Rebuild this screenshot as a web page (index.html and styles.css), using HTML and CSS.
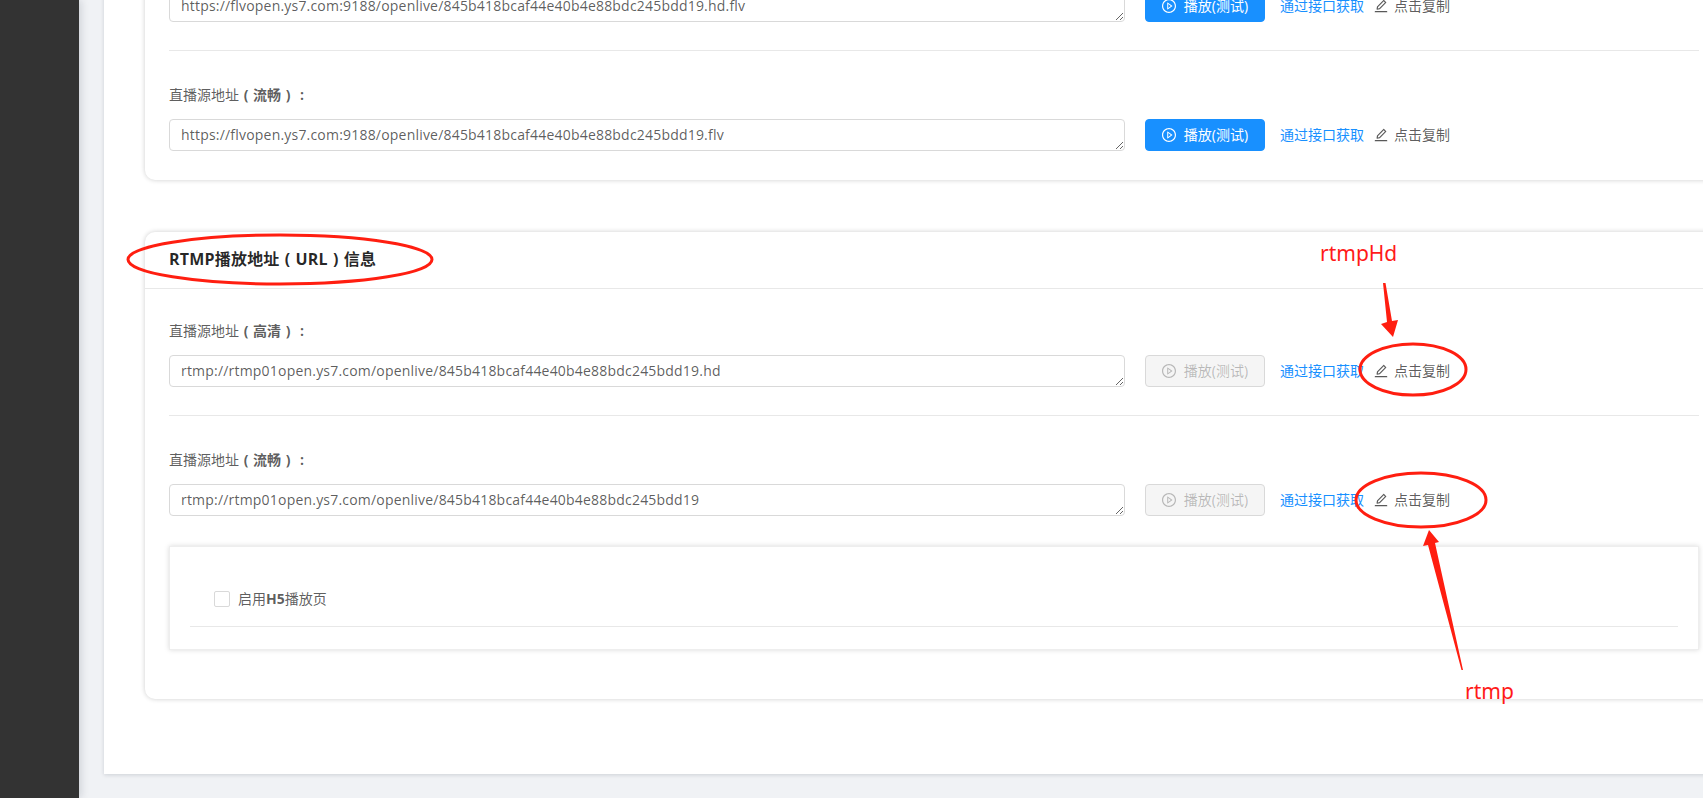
FILE: index.html
```html
<!DOCTYPE html>
<html>
<head>
    <title>播放地址</title>
    <meta charset="utf-8">
    <link rel="stylesheet" href="styles.css">
</head>

<body>
    <svg class="icon-defs">
        <symbol id="icon-play" viewBox="64 64 896 896"><path d="M512 64C264.6 64 64 264.6 64 512s200.6 448 448 448 448-200.6 448-448S759.4 64 512 64zm0 820c-205.4 0-372-166.6-372-372s166.6-372 372-372 372 166.6 372 372-166.6 372-372 372z"/><path d="M719.4 499.1l-296.1-215A15.9 15.9 0 0 0 398 297v430c0 13.1 14.8 20.5 25.3 12.9l296.1-215a15.9 15.9 0 0 0 0-25.8zm-257.6 134V390.9L628.5 512 461.8 633.1z"/></symbol>
        <symbol id="icon-edit" viewBox="64 64 896 896"><path d="M257.7 752c2 0 4-.2 6-.5L431.9 722c2-.4 3.9-1.3 5.3-2.8l423.9-423.9a9.96 9.96 0 0 0 0-14.1L694.9 114.9c-1.9-1.9-4.4-2.9-7.1-2.9s-5.2 1-7.1 2.9L256.8 538.8c-1.5 1.5-2.4 3.3-2.8 5.3l-29.5 168.2a33.5 33.5 0 0 0 9.4 29.8c6.6 6.4 14.9 9.9 23.8 9.9zm67.4-174.4L687.8 215l73.3 73.3-362.7 362.6-88.9 15.7 15.6-89zM880 836H144c-17.7 0-32 14.3-32 32v36c0 4.4 3.6 8 8 8h784c4.4 0 8-3.6 8-8v-36c0-17.7-14.3-32-32-32z"/></symbol>
    </svg>

    <div class="sidebar"></div>
    <div class="main">
        <div class="content">

            <div class="card card-first">
                <div class="card-body">
                    <div class="url-row">
                        <textarea class="url-input" readonly>https://flvopen.ys7.com:9188/openlive/845b418bcaf44e40b4e88bdc245bdd19.hd.flv</textarea>
                        <button class="play-btn"><svg class="icon"><use href="#icon-play"/></svg>播放(测试)</button>
                        <a class="api-link" href="#">通过接口获取</a>
                        <span class="copy"><svg class="icon"><use href="#icon-edit"/></svg>点击复制</span>
                    </div>
                    <div class="divider"></div>
                    <div class="url-label">直播源地址<b><span class="punct">(</span>流畅<span class="punct">)</span><span class="punct">:</span></b></div>
                    <div class="url-row">
                        <textarea class="url-input" readonly>https://flvopen.ys7.com:9188/openlive/845b418bcaf44e40b4e88bdc245bdd19.flv</textarea>
                        <button class="play-btn"><svg class="icon"><use href="#icon-play"/></svg>播放(测试)</button>
                        <a class="api-link" href="#">通过接口获取</a>
                        <span class="copy"><svg class="icon"><use href="#icon-edit"/></svg>点击复制</span>
                    </div>
                </div>
            </div>

            <div class="card card-rtmp">
                <div class="card-head">RTMP播放地址<span class="punct">(</span>URL<span class="punct">)</span>信息</div>
                <div class="card-body">
                    <div class="url-label">直播源地址<b><span class="punct">(</span>高清<span class="punct">)</span><span class="punct">:</span></b></div>
                    <div class="url-row">
                        <textarea class="url-input" readonly>rtmp://rtmp01open.ys7.com/openlive/845b418bcaf44e40b4e88bdc245bdd19.hd</textarea>
                        <button class="play-btn" disabled><svg class="icon"><use href="#icon-play"/></svg>播放(测试)</button>
                        <a class="api-link" href="#">通过接口获取</a>
                        <span class="copy"><svg class="icon"><use href="#icon-edit"/></svg>点击复制</span>
                    </div>
                    <div class="divider"></div>
                    <div class="url-label">直播源地址<b><span class="punct">(</span>流畅<span class="punct">)</span><span class="punct">:</span></b></div>
                    <div class="url-row">
                        <textarea class="url-input" readonly>rtmp://rtmp01open.ys7.com/openlive/845b418bcaf44e40b4e88bdc245bdd19</textarea>
                        <button class="play-btn" disabled><svg class="icon"><use href="#icon-play"/></svg>播放(测试)</button>
                        <a class="api-link" href="#">通过接口获取</a>
                        <span class="copy"><svg class="icon"><use href="#icon-edit"/></svg>点击复制</span>
                    </div>
                    <div class="h5-box">
                        <label class="h5-check"><span class="checkbox"></span>启用<b>H5</b>播放页</label>
                        <div class="h5-line"></div>
                    </div>
                </div>
            </div>

        </div>
    </div>

    <!-- red markup drawn on top of the screenshot -->
    <svg class="markup" width="1703" height="798">
        <ellipse cx="280" cy="259.5" rx="152" ry="24.5"/>
        <ellipse cx="1413" cy="369.5" rx="53" ry="25.5"/>
        <ellipse cx="1421" cy="500" rx="65" ry="27"/>
        <polygon class="arrow" points="1383,283 1385.5,283 1392,321 1398,320 1393,337 1381,324 1387,322"/>
        <polygon class="arrow" points="1429,530 1439,542 1435,543 1463,670 1461.5,670 1428,545 1423,546"/>
    </svg>
    <div class="note note-hd">rtmpHd</div>
    <div class="note note-rtmp">rtmp</div>
</body>
</html>
```

FILE: styles.css
```css
html, body {
    margin: 0;
    padding: 0;
    height: 100%;
}
body {
    position: relative;
    display: flex;
    height: 798px;
    overflow: hidden;
    background-color: #f0f2f5;
    font-family: "Open Sans", "Noto Sans CJK SC", sans-serif;
    font-size: 14px;
    line-height: 22px;
    color: rgba(0, 0, 0, 0.65);
}
.icon-defs {
    display: none;
}
.sidebar {
    flex: none;
    width: 79px;
    background-color: #333;
    box-shadow: 2px 0 8px rgba(0, 21, 41, 0.15);
}
.main {
    flex: none;
    padding-left: 25px;
}
.content {
    box-sizing: border-box;
    width: 1660px;
    height: 804px;
    margin-top: -30px;
    padding: 0 41px;
    background-color: #fff;
    box-shadow: 0 1px 4px rgba(0, 21, 41, 0.15);
}
.card {
    background-color: #fff;
    border-radius: 10px;
    box-shadow: 0 0 5px rgba(0, 0, 0, 0.2);
}
.card-first {
    padding-top: 20px;
    margin-bottom: 52px;
}
.card-first .card-body {
    padding: 0 24px 29px;
}
.card-head {
    height: 56px;
    padding: 0 24px;
    line-height: 55px;
    font-size: 16px;
    font-weight: bold;
    letter-spacing: 0.2px;
    color: rgba(0, 0, 0, 0.85);
    border-bottom: 1px solid #e8e8e8;
}
.card-rtmp .card-body {
    padding: 31px 24px 49px;
}
.punct {
    display: inline-block;
    width: 1em;
    text-align: center;
}
.url-label {
    margin-bottom: 13px;
}
.url-row {
    display: flex;
    align-items: center;
}
.url-input {
    box-sizing: border-box;
    display: block;
    flex: none;
    width: 956px;
    height: 32px;
    margin: 0 20px 0 0;
    padding: 4px 11px;
    font: inherit;
    line-height: 22px;
    letter-spacing: 0.2px;
    color: rgba(0, 0, 0, 0.65);
    background-color: #fff;
    border: 1px solid #d9d9d9;
    border-radius: 4px;
    outline: none;
    overflow: hidden;
}
.icon {
    display: block;
    flex: none;
    width: 14px;
    height: 14px;
    fill: currentColor;
}
.play-btn {
    box-sizing: border-box;
    display: flex;
    align-items: center;
    justify-content: center;
    gap: 8px;
    width: 120px;
    height: 32px;
    margin: 0 15px 0 0;
    padding: 0;
    font: inherit;
    color: #fff;
    background-color: #1890ff;
    border: 1px solid #1890ff;
    border-radius: 4px;
}
.play-btn:disabled {
    color: rgba(0, 0, 0, 0.25);
    background-color: #f5f5f5;
    border-color: #d9d9d9;
}
.api-link {
    margin-right: 10px;
    color: #1890ff;
    text-decoration: none;
}
.copy {
    display: flex;
    align-items: center;
    gap: 6px;
}
.divider {
    height: 1px;
    margin: 28px 0 33px;
    background-color: #e8e8e8;
}
.h5-box {
    box-sizing: border-box;
    height: 104px;
    margin-top: 30px;
    padding: 41px 20px 0;
    border: 1px solid #eee;
    box-shadow: 0 0 5px rgba(0, 0, 0, 0.15);
}
.h5-check {
    display: flex;
    align-items: center;
    height: 22px;
    margin: 0 0 16px 24px;
}
.checkbox {
    box-sizing: border-box;
    width: 16px;
    height: 16px;
    margin-right: 8px;
    background-color: #fff;
    border: 1px solid #d9d9d9;
    border-radius: 2px;
}
.h5-line {
    height: 1px;
    background-color: #e8e8e8;
}
.markup {
    position: absolute;
    top: 0;
    left: 0;
}
.markup ellipse {
    fill: none;
    stroke: #ff1e10;
    stroke-width: 3;
}
.markup .arrow {
    fill: #ff1e10;
}
.note {
    position: absolute;
    font-family: "Noto Sans", sans-serif;
    font-size: 21px;
    line-height: 28px;
    color: #ff1a1a;
}
.note-hd {
    top: 239px;
    left: 1320px;
}
.note-rtmp {
    top: 677px;
    left: 1465px;
}
```
